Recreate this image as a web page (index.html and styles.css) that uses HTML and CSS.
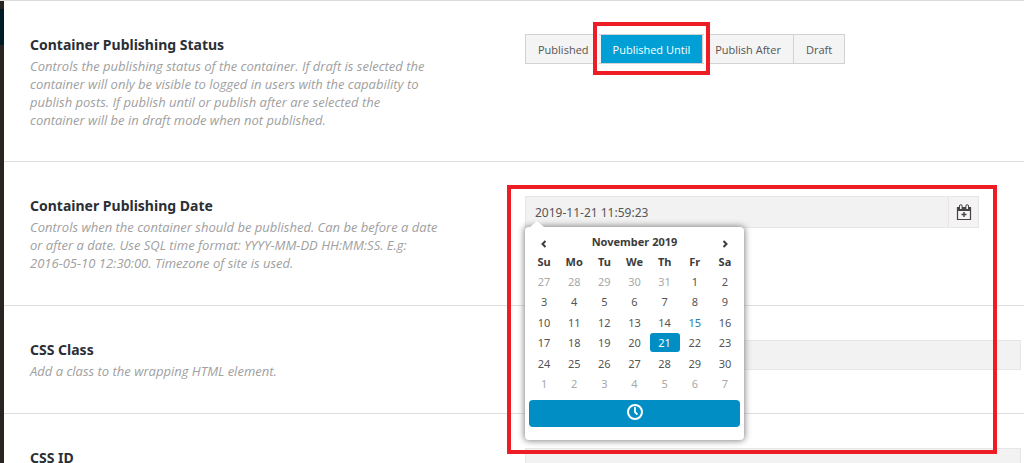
FILE: index.html
```
<!DOCTYPE html>
<html lang="en">
<head>
<meta charset="utf-8">
<title>Container settings</title>
<link rel="stylesheet" href="styles.css">
</head>
<body>
<main class="panel">
  <section class="option">
    <div class="about">
      <h2 class="title" id="status-title">Container Publishing Status</h2>
      <p class="description">Controls the publishing status of the container. If draft is selected the container will only be visible to logged in users with the capability to publish posts. If publish until or publish after are selected the<br>container will be in draft mode when not published.</p>
    </div>
    <div class="control">
      <div class="button-set" role="group" aria-labelledby="status-title">
        <button class="choice" type="button">Published</button>
        <div class="marked"><button class="choice selected" type="button" aria-pressed="true">Published Until</button></div>
        <button class="choice" type="button">Publish After</button>
        <button class="choice" type="button">Draft</button>
      </div>
    </div>
  </section>

  <section class="option">
    <div class="about">
      <h2 class="title"><label for="date">Container Publishing Date</label></h2>
      <p class="description">Controls when the container should be published. Can be before a date or after a date. Use SQL time format: YYYY-MM-DD HH:MM:SS. E.g:<br>2016-05-10 12:30:00. Timezone of site is used.</p>
    </div>
    <div class="control">
      <div class="date-field">
        <input class="text date-text" id="date" type="text" value="2019-11-21 11:59:23">
        <button class="date-button" type="button" aria-label="Choose date">
          <svg width="16" height="17" viewBox="0 0 16 17" fill="none" stroke="#444"><path d="M1 3h14v4H1z" fill="#444" stroke="none"/><path d="M1.500 3.500h13v12h-13z" stroke-width="1.200"/><path d="M8 8v5M5.500 10.500h5" stroke-width="1.400"/><path d="M3.500 5V2a1.300 1.300 0 0 1 2.600 0v3M9.900 5V2a1.300 1.300 0 0 1 2.600 0v3" fill="#f5f3f3" stroke-width="1"/></svg>
        </button>
        <div class="picker">
          <table class="calendar">
            <thead>
              <tr><th><button class="arrow" type="button" aria-label="Previous month"><svg width="6" height="8" viewBox="0 0 6 8"><path d="M4.500 1L1.500 4l3 3"/></svg></button></th><th colspan="5">November 2019</th><th><button class="arrow" type="button" aria-label="Next month"><svg width="6" height="8" viewBox="0 0 6 8"><path d="M1.500 1l3 3-3 3"/></svg></button></th></tr>
              <tr><th>Su</th><th>Mo</th><th>Tu</th><th>We</th><th>Th</th><th>Fr</th><th>Sa</th></tr>
            </thead>
            <tbody>
              <tr><td class="other">27</td><td class="other">28</td><td class="other">29</td><td class="other">30</td><td class="other">31</td><td>1</td><td>2</td></tr>
              <tr><td>3</td><td>4</td><td>5</td><td>6</td><td>7</td><td>8</td><td>9</td></tr>
              <tr><td>10</td><td>11</td><td>12</td><td>13</td><td>14</td><td class="today">15</td><td>16</td></tr>
              <tr><td>17</td><td>18</td><td>19</td><td>20</td><td><span class="day">21</span></td><td>22</td><td>23</td></tr>
              <tr><td>24</td><td>25</td><td>26</td><td>27</td><td>28</td><td>29</td><td>30</td></tr>
              <tr><td class="other">1</td><td class="other">2</td><td class="other">3</td><td class="other">4</td><td class="other">5</td><td class="other">6</td><td class="other">7</td></tr>
            </tbody>
          </table>
          <button class="time-button" type="button" aria-label="Choose time"><svg width="18" height="18" viewBox="0 0 18 18" fill="none" stroke="#fff" stroke-width="2"><circle cx="9" cy="9" r="7"/><path d="M9 4v5.200l2.500 2.500" stroke-width="1.800"/></svg></button>
        </div>
      </div>
    </div>
  </section>

  <section class="option">
    <div class="about">
      <h2 class="title"><label for="css-class">CSS Class</label></h2>
      <p class="description">Add a class to the wrapping HTML element.</p>
    </div>
    <div class="control"><input class="text" id="css-class" type="text"></div>
  </section>

  <section class="option">
    <div class="about">
      <h2 class="title"><label for="css-id">CSS ID</label></h2>
    </div>
    <div class="control"><input class="text" id="css-id" type="text"></div>
  </section>
</main>
</body>
</html>
```
FILE: styles.css
```
* {
  box-sizing: border-box;
}

body {
  margin: 0;
  height: 100vh;
  overflow: hidden;
  background: #fff;
  font-family: "Noto Sans", "Open Sans", sans-serif;
}

button, input {
  margin: 0;
  font-family: inherit;
}

.panel {
  min-height: 100vh;
  padding-left: 4px;
  border-top: 1px solid #dcdcdc;
  background:
    linear-gradient(#001a26, #001a26) 0 8px / 4px 36px no-repeat,
    linear-gradient(#272422, #272422) 0 0 / 4px 100% no-repeat;
}

.option {
  display: grid;
  grid-template-columns: 495px 1fr;
  padding: 32px 3px 33px 26px;
  border-bottom: 1px solid #dedede;
}

.option:first-child {
  padding-bottom: 32px;
}

.option:last-child {
  padding-bottom: 0;
  border-bottom: 0;
}

.title {
  margin: 0 0 1px;
  font-size: 14px;
  line-height: 23px;
  font-weight: 700;
  color: #2b2f36;
}

.description {
  margin: 0;
  max-width: 415px;
  font-family: "Open Sans", sans-serif;
  font-size: 13px;
  line-height: 18px;
  font-style: italic;
  color: #a0a0a0;
}

.button-set {
  display: flex;
  width: fit-content;
  margin-top: 1px;
  border: 1px solid #d2d2d2;
  background: #f4f4f4;
}

.choice {
  display: block;
  height: 28px;
  padding: 0 12px;
  border: 0;
  border-left: 1px solid #d2d2d2;
  background: transparent;
  font-family: "Open Sans", sans-serif;
  font-size: 11px;
  color: #555;
}

.choice:first-child {
  border-left: 0;
}

.choice.selected {
  background: #00a0d6;
  color: #fff;
}

.marked {
  position: relative;
}

.marked::after {
  content: "";
  position: absolute;
  inset: -13px -8px -12px;
  border: 4px solid #ee1c25;
  box-shadow: inset 0 0 0 2px #fff;
}

.text {
  display: block;
  width: 100%;
  height: 30px;
  margin-top: 2px;
  padding: 0 9px;
  border: 1px solid #e6e6e6;
  background: #f3f2f2;
  font-size: 12px;
  color: #555;
}

.date-field {
  position: relative;
  display: flex;
  height: 32px;
  margin: 2px 42px 0 0;
}

.date-field::after {
  content: "";
  position: absolute;
  z-index: 3;
  inset: -11px -18px -226px;
  border: 4px solid #ee1c25;
  pointer-events: none;
}

.date-text {
  height: 32px;
  margin: 0;
}

.date-button {
  display: grid;
  place-items: center;
  flex: 0 0 30px;
  padding: 0;
  border: 1px solid #e6e6e6;
  border-left: 0;
  background: #f5f3f3;
}

.picker {
  position: absolute;
  z-index: 2;
  top: 31px;
  left: 0;
  width: 219px;
  padding: 4px 4px 13px;
  border-radius: 4px;
  background: #fff;
  box-shadow: 0 0 6px 1px #888;
}

.picker::before {
  content: "";
  position: absolute;
  top: -6px;
  left: 5px;
  border: solid transparent;
  border-width: 0 7px 6px;
  border-bottom-color: #fff;
}

.calendar {
  width: 100%;
  height: 163px;
  table-layout: fixed;
  border-collapse: separate;
  border-spacing: 0;
  font-size: 11px;
  line-height: 19px;
  text-align: center;
  color: #555;
}

.calendar th,
.calendar td {
  height: 20px;
  padding: 0;
}

.calendar th {
  color: #3c3c3c;
  font-weight: 700;
}

.calendar .other {
  color: #a8a8a8;
}

.calendar .today {
  color: #2a7ba8;
}

.day {
  display: block;
  border-radius: 3px;
  background: #008ec5;
  color: #fff;
}

.arrow {
  display: block;
  width: 100%;
  height: 18px;
  padding: 4px 0 0;
  border: 0;
  background: transparent;
  line-height: 8px;
}

.arrow path {
  fill: none;
  stroke: #3c3c3c;
  stroke-width: 2;
}

.time-button {
  display: grid;
  align-content: start;
  justify-content: center;
  width: 100%;
  height: 27px;
  margin-top: 6px;
  padding: 3px 0;
  border: 0;
  border-radius: 4px;
  background: #008ec5;
}
```
